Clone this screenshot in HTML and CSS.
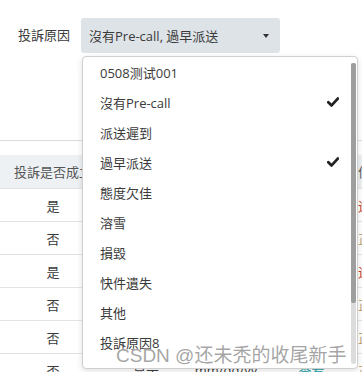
FILE: index.html
```html
<!DOCTYPE html>
<html lang="zh">
<head>
<meta charset="utf-8">
<link rel="stylesheet" href="styles.css">
</head>
<body>
<div class="page">
  <div class="form-row">
    <label class="form-label">投訴原因</label>
    <div class="select">
      <span class="select-text">沒有Pre-call, 過早派送</span>
      <span class="caret"></span>
    </div>
  </div>

  <table class="grid">
    <colgroup>
      <col class="c1"><col class="c2"><col class="c3"><col class="c4"><col class="c5">
    </colgroup>
    <thead>
      <tr><th>投訴是否成立</th><th>處理</th><th>日期</th><th>狀態</th><th class="left blue">信息</th></tr>
    </thead>
    <tbody>
      <tr><td>是</td><td></td><td></td><td></td><td class="left red">逾期</td></tr>
      <tr><td>否</td><td></td><td></td><td></td><td class="left tan">正常</td></tr>
      <tr><td>是</td><td></td><td></td><td></td><td class="left red">逾期</td></tr>
      <tr><td>否</td><td></td><td></td><td></td><td class="left tan">正常</td></tr>
      <tr><td>否</td><td></td><td></td><td></td><td class="left tan">正常</td></tr>
      <tr><td>否</td><td>显示</td><td>mm/dd/yy</td><td class="teal">查看</td><td class="left tan">正常</td></tr>
    </tbody>
  </table>
</div>

<div class="menu">
  <ul class="menu-list">
    <li class="item">0508测试001</li>
    <li class="item">沒有Pre-call<svg class="check" viewBox="0 0 12 10" width="12" height="10"><polyline points="1.3,5.2 4.6,8.4 10.8,1.6" fill="none" stroke="#222" stroke-width="2.8" stroke-linecap="round" stroke-linejoin="round"/></svg></li>
    <li class="item">派送遲到</li>
    <li class="item">過早派送<svg class="check" viewBox="0 0 12 10" width="12" height="10"><polyline points="1.3,5.2 4.6,8.4 10.8,1.6" fill="none" stroke="#222" stroke-width="2.8" stroke-linecap="round" stroke-linejoin="round"/></svg></li>
    <li class="item">態度欠佳</li>
    <li class="item">溶雪</li>
    <li class="item">損毀</li>
    <li class="item">快件遺失</li>
    <li class="item">其他</li>
    <li class="item">投訴原因8</li>
  </ul>
  <div class="scrollbar"><div class="thumb"></div></div>
</div>

<div class="watermark">CSDN @还未秃的收尾新手</div>
</body>
</html>
```
FILE: styles.css
```css
html, body {
  margin: 0;
  padding: 0;
  background: #fff;
  overflow: hidden;
}
body {
  width: 362px;
  height: 372px;
  position: relative;
  font-family: "Open Sans", "Noto Sans CJK SC", sans-serif;
  font-size: 13px;
  color: #3a3a3a;
}
.page {
  width: 362px;
}
.form-row {
  display: flex;
  align-items: flex-start;
  height: 122px;
  padding-top: 18px;
  border-bottom: 1px solid #dcdcdc;
}
.form-label {
  flex: none;
  width: 81px;
  padding-left: 18px;
  box-sizing: border-box;
  line-height: 35px;
  color: #3a3a3a;
}
.select {
  width: 199px;
  height: 35px;
  background: #dee3e8;
  border-radius: 3px;
  display: flex;
  align-items: center;
  justify-content: space-between;
  padding: 0 8px;
  box-sizing: border-box;
}
.select-text {
  color: #3a3a3a;
}
.caret {
  width: 0;
  height: 0;
  border-left: 3.5px solid transparent;
  border-right: 3.5px solid transparent;
  border-top: 4px solid #333;
  margin-right: 3px;
}
.grid {
  margin-top: 14px;
  border-collapse: collapse;
  table-layout: fixed;
  width: 420px;
}
.c1 { width: 106px; }
.c2 { width: 80px; }
.c3 { width: 80px; }
.c4 { width: 91px; }
.c5 { width: 63px; }
.grid th {
  height: 33px;
  background: #eef1f4;
  font-weight: normal;
  color: #555;
  text-align: center;
  white-space: nowrap;
  overflow: hidden;
  padding: 0;
  border-bottom: 1px solid #e3e3e3;
}
.grid td {
  height: 32px;
  text-align: center;
  padding: 0;
  border-bottom: 1px solid #e3e3e3;
  white-space: nowrap;
  overflow: hidden;
}
.grid .left { text-align: left; padding-left: 1px; }
.blue { color: #3a7fc1; }
.red { color: #c0392b; }
.tan { color: #b8a37a; }
.teal { color: #1aa0a8; }

.menu {
  position: absolute;
  left: 82px;
  top: 56px;
  width: 276px;
  height: 313px;
  box-sizing: border-box;
  background: #fff;
  border: 1px solid #cfcfcf;
  border-radius: 4px;
  box-shadow: 0 2px 6px rgba(0,0,0,0.12);
  display: flex;
  overflow: hidden;
}
.menu-list {
  list-style: none;
  margin: 0;
  padding: 0;
  flex: 1;
}
.item {
  height: 30px;
  display: flex;
  align-items: center;
  justify-content: space-between;
  padding: 0 12px 0 17px;
  color: #3a3a3a;
}
.check {
  display: block;
}
.scrollbar {
  width: 5px;
  margin: 6px 1px 4px 0;
  background: #dcdcdc;
  border-radius: 2px;
}
.thumb {
  height: 240px;
  background: #9e9e9e;
  border-radius: 2px;
}
.watermark {
  position: absolute;
  left: 116px;
  top: 340px;
  font-family: "Liberation Sans", "Noto Sans CJK SC", sans-serif;
  font-size: 19px;
  color: rgba(125,125,125,0.7);
  white-space: nowrap;
  text-shadow: 0 0 2px #fff;
}
```
